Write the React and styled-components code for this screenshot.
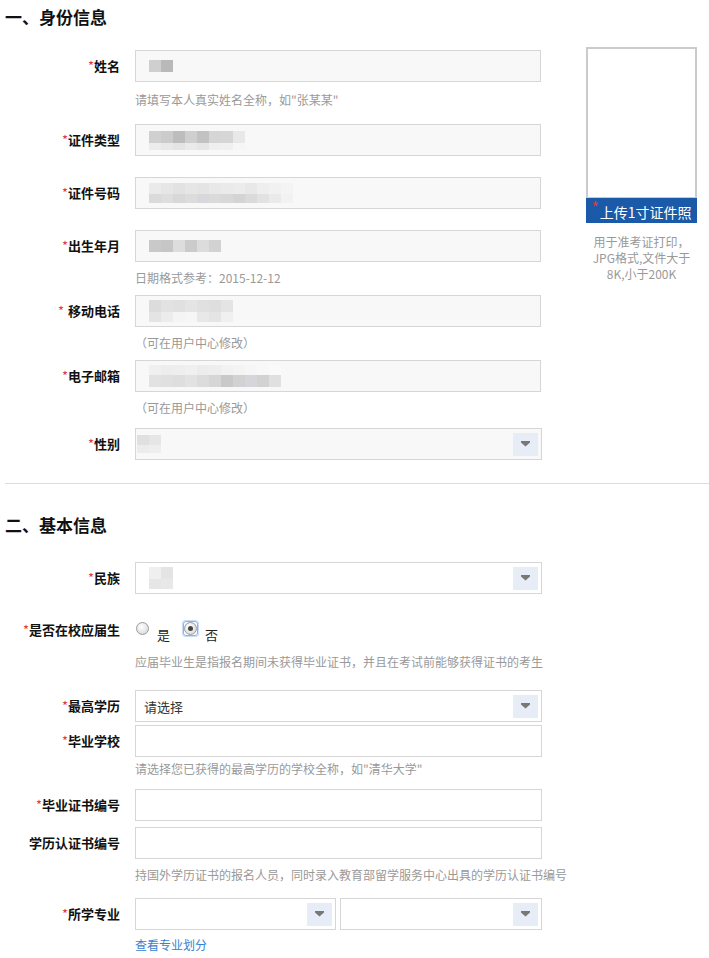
import React from 'react';
import styled, { createGlobalStyle } from 'styled-components';

const GlobalStyle = createGlobalStyle`
  html, body {
    margin: 0;
    padding: 0;
    background: #fff;
  }
  body {
    font-family: "Noto Sans CJK SC", "Microsoft YaHei", sans-serif;
    color: #333;
  }
`;

const Page = styled.div`
  width: 709px;
  padding: 0 0 0 5px;
  box-sizing: border-box;
`;

const SectionTitle = styled.h2`
  margin: 0;
  padding-top: ${p => p.$top}px;
  font-size: 17px;
  line-height: 24px;
  font-weight: bold;
  color: #111;
`;

const Divider = styled.div`
  margin-top: 23px;
  height: 1px;
  background: #dcdcdc;
`;

const SectionBody = styled.div`
  display: flex;
  align-items: flex-start;
  margin-top: 18px;
`;

const Fields = styled.div`
  padding-top: ${p => p.$top || 0}px;
`;

const Row = styled.div`
  display: grid;
  grid-template-columns: 115px auto;
  column-gap: 15px;
  align-items: center;
  margin-top: ${p => p.$mt || 0}px;
`;

const Label = styled.label`
  text-align: right;
  font-size: 13px;
  font-weight: bold;
  color: #111;
  white-space: nowrap;
  margin-top: -2px;
`;

const Star = styled.span`
  color: #e4393c;
  font-weight: normal;
  margin-right: ${p => (p.$space ? 4 : 0)}px;
`;

const Hint = styled.div`
  margin-top: ${p => p.$mt || 0}px;
  padding-left: 130px;
  font-size: 12px;
  line-height: 20px;
  color: #999;
  white-space: nowrap;
`;

const Link = styled.a`
  display: block;
  margin-top: ${p => p.$mt || 0}px;
  margin-left: 130px;
  font-size: 12px;
  line-height: 20px;
  color: #3a7fd0;
  text-decoration: none;
`;

const Box = styled.div`
  box-sizing: border-box;
  width: ${p => p.$w || 406}px;
  height: 32px;
  border: 1px solid #d6d6d6;
  background: ${p => (p.$muted ? '#f8f8f8' : '#fff')};
  display: flex;
  align-items: center;
  padding-left: ${p => (p.$pad === undefined ? 13 : p.$pad)}px;
  padding-right: 3px;
  font-size: 13px;
  color: #333;
`;

const SelectButton = styled.span`
  margin-left: auto;
  width: 25px;
  height: 23px;
  background: #e6edf6;
  display: flex;
  align-items: center;
  justify-content: center;
`;

const Pair = styled.div`
  display: flex;
  gap: 4px;
`;

const MosaicWrap = styled.span`
  display: inline-flex;
  flex-direction: column;
  filter: blur(0.5px);
`;

const MosaicRow = styled.span`
  display: flex;
  height: ${p => p.$h}px;
`;

const Cell = styled.span`
  width: 12px;
  height: 100%;
  background: ${p => p.$c};
`;

const Photo = styled.div`
  margin-left: 44px;
  width: 111px;
`;

const PhotoFrame = styled.div`
  box-sizing: border-box;
  height: 151px;
  border: 2px solid #cbcbcb;
  border-bottom-width: 1px;
  background: #fff;
`;

const UploadBar = styled.div`
  height: 25px;
  background: #1b59a9;
  color: #fff;
  font-size: 14px;
  line-height: 27px;
  text-align: center;
  white-space: nowrap;
`;

const UploadStar = styled.span`
  color: #ff2a2a;
  font-size: 16px;
  position: relative;
  top: -4px;
  margin-right: 1px;
`;

const PhotoNote = styled.div`
  margin-top: 11px;
  font-size: 12px;
  line-height: 16px;
  color: #999;
  text-align: center;
`;

const RadioGroup = styled.div`
  display: flex;
  align-items: center;
  height: 20px;
`;

const RadioItem = styled.span`
  display: inline-flex;
  align-items: center;
  margin-right: ${p => p.$mr || 0}px;
`;

const RadioRing = styled.span`
  box-sizing: border-box;
  display: inline-flex;
  align-items: center;
  justify-content: center;
  width: 15px;
  height: 15px;
  margin-top: -4px;
  border-radius: 3px;
  border: 1px solid ${p => (p.$focus ? '#8ab4f0' : 'transparent')};
  box-shadow: ${p => (p.$focus ? '0 0 0 1px #c6dafa' : 'none')};
`;

const RadioCircle = styled.span`
  box-sizing: border-box;
  width: 13px;
  height: 13px;
  border-radius: 50%;
  border: 1px solid #9a9a9a;
  background: radial-gradient(circle at 40% 35%, #fff 0%, #e6e6e6 55%, #cfcfcf 100%);
  display: inline-flex;
  align-items: center;
  justify-content: center;
`;

const RadioDot = styled.span`
  width: 5px;
  height: 5px;
  border-radius: 50%;
  background: #444;
`;

const RadioText = styled.span`
  font-size: 13px;
  color: #222;
  margin-left: 7px;
  margin-top: 8px;
`;

const Arrow = () => (
  <svg width="9" height="6" viewBox="0 0 9 6">
    <path d="M0 0H9V1.4L4.5 5.6 0 1.4Z" fill="#777" />
  </svg>
);

const Mosaic = ({ rows }) => (
  <MosaicWrap>
    {rows.map((r, i) => (
      <MosaicRow key={i} $h={r.h}>
        {r.c.map((c, j) => (
          <Cell key={j} $c={c} />
        ))}
      </MosaicRow>
    ))}
  </MosaicWrap>
);

const Select = ({ children, w = 407, muted, pad }) => (
  <Box $w={w} $muted={muted} $pad={pad}>
    {children}
    <SelectButton>
      <Arrow />
    </SelectButton>
  </Box>
);

const Field = ({ label, required = true, space, mt, children }) => (
  <Row $mt={mt}>
    <Label>
      {required && <Star $space={space}>*</Star>}
      {label}
    </Label>
    {children}
  </Row>
);

const masks = {
  name: [{ h: 12, c: ['#cfcfcf', '#b9b9b9'] }],
  idType: [
    { h: 12, c: ['#d0d0d0', '#cbcbcb', '#bdbdbd', '#cfcfcf', '#c2c2c2', '#d5d5d5', '#d6d6d6', '#e8e8e8'] },
    { h: 7, c: ['#ececec', '#e8e8e8', '#e4e4e4', '#eaeaea', '#e6e6e6', '#efefef', '#f0f0f0', '#f6f6f6'] }
  ],
  idNo: [
    { h: 11, c: ['#eaeaea', '#e6e6e6', '#e2e2e2', '#e6e6e6', '#e4e4e4', '#e8e8e8', '#eaeaea', '#ececec', '#e8e8e8', '#eeeeee', '#f1f1f1', '#f4f4f4'] },
    { h: 9, c: ['#dadada', '#dedede', '#d8d8d8', '#dcdcdc', '#d8d8dc', '#dadada', '#d8d8d8', '#d4d4d4', '#dadada', '#e2e2e2', '#eaeaea', '#f2f2f2'] }
  ],
  birth: [{ h: 12, c: ['#c9c9c9', '#c6c6c6', '#dddddd', '#cbcbcb', '#dcdcdc', '#d2d2d2'] }],
  phone: [
    { h: 12, c: ['#dcdcdc', '#e2e2e2', '#e0e0e0', '#e4e4e4', '#e0e0e0', '#dedede', '#e4e4e4'] },
    { h: 10, c: ['#e4e4e4', '#ececec', '#f4f4f4', '#f6f6f6', '#e8e8e8', '#e4e4e4', '#f0f0f0'] }
  ],
  email: [
    { h: 10, c: ['#f0f0f0', '#ededed', '#eeeeee', '#f0f0f0', '#ececec', '#eeeeee', '#f2f2f2', '#f4f4f4', '#f6f6f6', '#f8f8f8', '#fafafa'] },
    { h: 12, c: ['#e2e2e2', '#e0e0e0', '#dedede', '#e2e2e2', '#dcdcdc', '#d6d6d6', '#c9c9c9', '#d2d2d2', '#d6d6da', '#d2d2d2', '#e0e0e0'] }
  ],
  gender: [
    { h: 10, c: ['#e0e0e0', '#e6e6e6'] },
    { h: 8, c: ['#ececec', '#eeeeee'] }
  ],
  nation: [
    { h: 12, c: ['#efefef', '#e4e4e4'] },
    { h: 10, c: ['#e6e6e6', '#e8e8e8'] }
  ]
};

export default function App() {
  return (
    <Page>
      <GlobalStyle />
      <SectionTitle $top={5}>一、身份信息</SectionTitle>
      <SectionBody>
        <Fields $top={3}>
          <Field label="姓名">
            <Box $muted><Mosaic rows={masks.name} /></Box>
          </Field>
          <Hint $mt={8}>请填写本人真实姓名全称，如"张某某"</Hint>

          <Field label="证件类型" mt={14}>
            <Box $muted><Mosaic rows={masks.idType} /></Box>
          </Field>

          <Field label="证件号码" mt={21}>
            <Box $muted><Mosaic rows={masks.idNo} /></Box>
          </Field>

          <Field label="出生年月" mt={21}>
            <Box $muted><Mosaic rows={masks.birth} /></Box>
          </Field>
          <Hint $mt={6}>日期格式参考：2015-12-12</Hint>

          <Field label="移动电话" space mt={7}>
            <Box $muted><Mosaic rows={masks.phone} /></Box>
          </Field>
          <Hint $mt={6}>（可在用户中心修改）</Hint>

          <Field label="电子邮箱" mt={7}>
            <Box $muted><Mosaic rows={masks.email} /></Box>
          </Field>
          <Hint $mt={6}>（可在用户中心修改）</Hint>

          <Field label="性别" mt={10}>
            <Select muted pad={1}><Mosaic rows={masks.gender} /></Select>
          </Field>
        </Fields>

        <Photo>
          <PhotoFrame />
          <UploadBar>
            <UploadStar>*</UploadStar>上传1寸证件照
          </UploadBar>
          <PhotoNote>
            用于准考证打印，
            <br />
            JPG格式,文件大于
            <br />
            8K,小于200K
          </PhotoNote>
        </Photo>
      </SectionBody>

      <Divider />

      <SectionTitle $top={29}>二、基本信息</SectionTitle>
      <Fields>
        <Field label="民族" mt={25}>
          <Select><Mosaic rows={masks.nation} /></Select>
        </Field>

        <Field label="是否在校应届生" mt={26}>
          <RadioGroup>
            <RadioItem $mr={13}>
              <RadioRing>
                <RadioCircle />
              </RadioRing>
              <RadioText>是</RadioText>
            </RadioItem>
            <RadioItem>
              <RadioRing $focus>
                <RadioCircle>
                  <RadioDot />
                </RadioCircle>
              </RadioRing>
              <RadioText>否</RadioText>
            </RadioItem>
          </RadioGroup>
        </Field>
        <Hint $mt={12}>应届毕业生是指报名期间未获得毕业证书，并且在考试前能够获得证书的考生</Hint>

        <Field label="最高学历" mt={18}>
          <Select pad={8}>请选择</Select>
        </Field>

        <Field label="毕业学校" mt={3}>
          <Box $w={407} />
        </Field>
        <Hint $mt={2}>请选择您已获得的最高学历的学校全称，如"清华大学"</Hint>

        <Field label="毕业证书编号" mt={10}>
          <Box $w={407} />
        </Field>

        <Field label="学历认证书编号" required={false} mt={6}>
          <Box $w={407} />
        </Field>
        <Hint $mt={6}>持国外学历证书的报名人员，同时录入教育部留学服务中心出具的学历认证书编号</Hint>

        <Field label="所学专业" mt={13}>
          <Pair>
            <Select w={201} />
            <Select w={202} />
          </Pair>
        </Field>
        <Link href="#" $mt={5}>查看专业划分</Link>
      </Fields>
    </Page>
  );
}
